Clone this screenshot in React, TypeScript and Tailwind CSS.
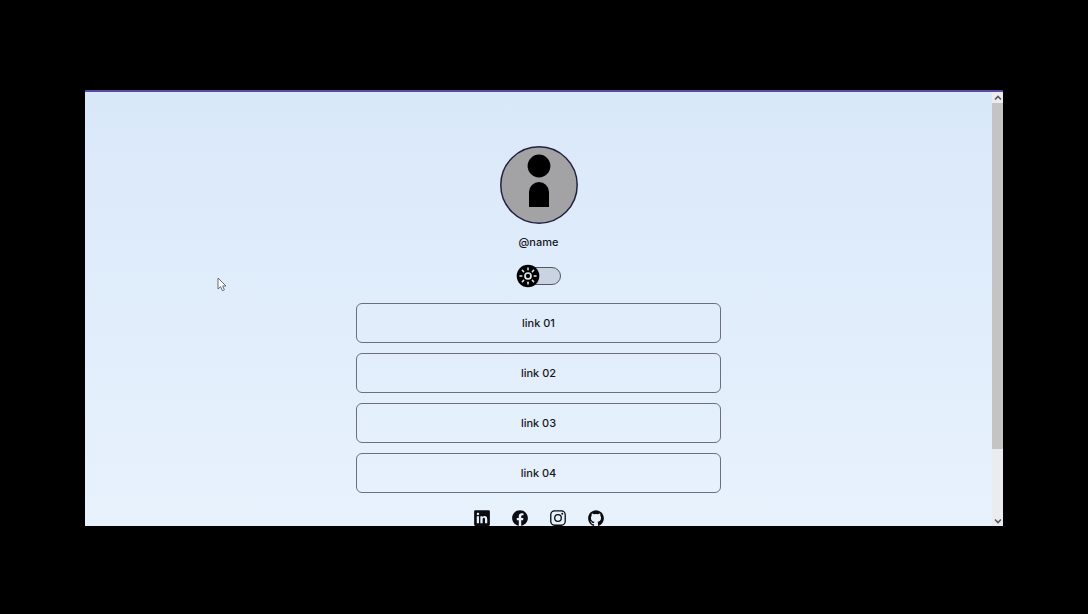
import { useState } from "react";
import { IoLogoFacebook, IoLogoGithub, IoLogoInstagram, IoLogoLinkedin } from "react-icons/io5";

const links = ["link 01", "link 02", "link 03", "link 04"];

const socials = [
  { name: "LinkedIn", Icon: IoLogoLinkedin },
  { name: "Facebook", Icon: IoLogoFacebook },
  { name: "Instagram", Icon: IoLogoInstagram },
  { name: "GitHub", Icon: IoLogoGithub },
];

const rays = [0, 45, 90, 135, 180, 225, 270, 315];

function Avatar() {
  return (
    <svg viewBox="0 0 78 78" className="size-[78px] shrink-0" role="img" aria-label="Profile picture">
      <circle cx="39" cy="39" r="38.2" fill="#a3a3a5" stroke="#24213f" strokeWidth="1.5" />
      <circle cx="39" cy="20" r="11.4" />
      <path d="M29 61V46a10 10 0 0 1 20 0v15z" />
    </svg>
  );
}

function ThemeSwitch() {
  const [dark, setDark] = useState(false);
  return (
    <label className="relative flex h-6 w-[45px] cursor-pointer items-center justify-end">
      <input
        type="checkbox"
        role="switch"
        aria-label="Theme"
        checked={dark}
        onChange={() => setDark(!dark)}
        className="h-[18px] w-10 cursor-pointer appearance-none rounded-full border border-[#55565f] bg-[#c9d3e1]"
      />
      <svg
        viewBox="0 0 24 24"
        aria-hidden="true"
        className={dark ? "pointer-events-none absolute right-0 size-6" : "pointer-events-none absolute left-0 size-6"}
      >
        <circle cx="12" cy="12" r="11.3" />
        <g fill="none" stroke="#e3e9f1" strokeLinecap="round">
          <circle cx="12" cy="12" r="3" strokeWidth="1.7" />
          {rays.map((angle) => (
            <path key={angle} d="M12 4v1.8" strokeWidth="1.5" transform={`rotate(${angle} 12 12)`} />
          ))}
        </g>
      </svg>
    </label>
  );
}

function ScrollBar() {
  return (
    <div className="flex w-[11px] shrink-0 flex-col bg-[#ebecee]">
      <button type="button" aria-label="Scroll up" className="flex h-[11px] items-center justify-center">
        <svg viewBox="0 0 8 6" className="h-[6px] w-2" fill="none" stroke="#57585b" strokeWidth="1.6">
          <path d="M1 4.5 4 1.5l3 3" />
        </svg>
      </button>
      <div className="flex-1">
        <div className="h-[84%] bg-[#c4c4c5]" />
      </div>
      <button type="button" aria-label="Scroll down" className="flex h-[11px] items-center justify-center">
        <svg viewBox="0 0 8 6" className="h-[6px] w-2" fill="none" stroke="#57585b" strokeWidth="1.6">
          <path d="M1 1.5 4 4.5l3-3" />
        </svg>
      </button>
    </div>
  );
}

function Pointer() {
  return (
    <svg viewBox="0 0 10 15" className="pointer-events-none absolute top-[185px] left-[132px] h-[15px] w-[10px]" aria-hidden="true">
      <path d="M1 1v11l2.6-2.3 1.8 4 2-.9-1.8-3.8H9z" fill="#fff" stroke="#666b78" />
    </svg>
  );
}

export default function App() {
  return (
    <div className="flex h-screen flex-col bg-black px-[85px] pt-[90px] pb-[88px] font-['Inter',sans-serif] text-[#17171c]">
      <div className="flex min-h-0 flex-1 overflow-hidden border-t-2 border-[#5a4aa0]">
        <main className="relative flex flex-1 flex-col items-center overflow-hidden bg-linear-to-b from-[#d9e8f9] to-[#e8f2fd] pt-[54px]">
          <Avatar />
          <h1 className="mt-2.5 text-[11px] leading-4 font-medium">@name</h1>
          <div className="mt-3.5">
            <ThemeSwitch />
          </div>
          <ul className="mt-[15px] flex w-full max-w-[365px] flex-col gap-2.5">
            {links.map((link) => (
              <li key={link}>
                <a
                  href="#"
                  className="flex h-10 items-center justify-center rounded-md border border-[#6d7079] text-[11px] font-medium"
                >
                  {link}
                </a>
              </li>
            ))}
          </ul>
          <nav aria-label="Social" className="mt-4 flex gap-5">
            {socials.map(({ name, Icon }) => (
              <a key={name} href="#" aria-label={name}>
                <Icon className="size-[18px] text-[#0b0b10]" />
              </a>
            ))}
          </nav>
          <Pointer />
        </main>
        <ScrollBar />
      </div>
    </div>
  );
}
